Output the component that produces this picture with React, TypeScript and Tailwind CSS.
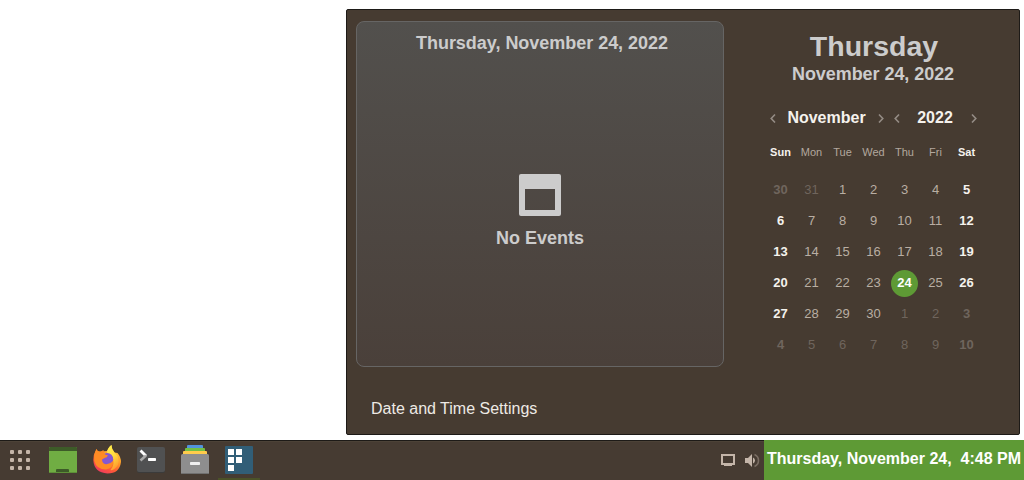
const WEEKDAYS = ['Sun', 'Mon', 'Tue', 'Wed', 'Thu', 'Fri', 'Sat'];
const DAYS = [30, 31, ...Array.from({ length: 30 }, (_, i) => i + 1), ...Array.from({ length: 10 }, (_, i) => i + 1)];

function dayClass(index: number): string {
  const outside = index < 2 || index > 31;
  const weekend = index % 7 === 0 || index % 7 === 6;
  if (index === 25) return 'mt-[2px] bg-[#5e9a35] pb-[2px] font-bold text-white';
  if (outside) return weekend ? 'font-bold text-[#6f655d]' : 'text-[#6f655d]';
  return weekend ? 'font-bold text-[#f5f2ed]' : 'text-[#b9aea3]';
}

function Chevron({ right = false }: { right?: boolean }) {
  return (
    <svg width="6" height="10" viewBox="0 0 6 10" fill="none" stroke="#948c85" strokeWidth="1.6">
      <path d={right ? 'M1 1.5 4.8 5.5 1 9.5' : 'M5 1.5 1.2 5.5 5 9.5'} />
    </svg>
  );
}

function EventsCard() {
  return (
    <section className="flex h-[346px] w-[368px] flex-col items-center rounded-lg border border-[#666564] bg-linear-to-b from-[#52504d] to-[#4a403a] text-lg font-bold text-[#cccccc]">
      <h2 className="mt-[7px] ml-1 leading-7 tracking-[-0.03px]">Thursday, November 24, 2022</h2>
      <svg className="mt-[117px]" width="42" height="42" viewBox="0 0 42 42">
        <path fill="#cccccc" fillRule="evenodd" d="M2 0H40Q42 0 42 2V40Q42 42 40 42H2Q0 42 0 40V2Q0 0 2 0ZM6 15V36H36V15Z" />
      </svg>
      <p className="mt-2 leading-7">No Events</p>
    </section>
  );
}

function Calendar() {
  return (
    <section className="flex w-[217px] flex-col items-center">
      <h1 className="mt-[5px] ml-px text-[28.5px] leading-[42px] font-bold text-[#cccccc]">Thursday</h1>
      <p className="-ml-px text-lg leading-[14px] font-bold tracking-[-0.06px] text-[#cccccc]">November 24, 2022</p>
      <div className="mt-[25px] flex h-6 w-[207px] items-center justify-between text-base font-bold text-[#f5f2ed]">
        <div className="flex w-[114px] items-center justify-between">
          <Chevron />
          <span className="-ml-px">November</span>
          <Chevron right />
        </div>
        <div className="flex w-[83px] items-center justify-between">
          <Chevron />
          <span className="-ml-px">2022</span>
          <Chevron right />
        </div>
      </div>
      <div className="mt-3 grid h-5 grid-cols-7 text-center text-[11px] leading-5">
        {WEEKDAYS.map((day, i) => (
          <span key={day} className={i % 6 === 0 ? 'w-[31px] font-bold text-[#f5f2ed]' : 'w-[31px] text-[#b3a89e]'}>
            {day}
          </span>
        ))}
      </div>
      <div className="mt-3 grid grid-cols-7 text-[13px]">
        {DAYS.map((day, i) => (
          <span key={i} className="flex h-[31px] w-[31px] items-center justify-center">
            <span className={`flex h-[27px] w-[27px] items-center justify-center rounded-full leading-none ${dayClass(i)}`}>{day}</span>
          </span>
        ))}
      </div>
    </section>
  );
}

function AppsIcon() {
  return (
    <svg width="22" height="22" viewBox="0 0 22 22" fill="#c4b5a9">
      {[1, 9, 17].map((y) => [1, 9, 17].map((x) => <rect key={`${x}-${y}`} x={x} y={y} width="4" height="4" rx="1" />))}
    </svg>
  );
}

function DesktopIcon() {
  return (
    <svg width="28" height="28" viewBox="0 0 28 28">
      <rect y="1" width="28" height="26" rx="1" fill="#70ad43" />
      <path d="M0 5V2Q0 1 1 1H27Q28 1 28 2V5ZM7 26V24Q7 23 8 23H19Q20 23 20 24V26Z" fill="#3d5b28" />
      <path d="M0 26H28Q28 27 27 27H1Q0 27 0 26Z" fill="#5d9038" />
    </svg>
  );
}

function FirefoxIcon() {
  return (
    <svg width="28" height="30" viewBox="0 0 28 30">
      <defs>
        <linearGradient id="fox" x1=".85" y1=".1" x2=".3" y2="1">
          <stop offset="0" stopColor="#ffd13a" />
          <stop offset=".4" stopColor="#ff9828" />
          <stop offset=".7" stopColor="#ff5a36" />
          <stop offset="1" stopColor="#f0395f" />
        </linearGradient>
        <linearGradient id="flame" x1=".3" y1="0" x2=".7" y2="1">
          <stop offset="0" stopColor="#fff04f" />
          <stop offset=".5" stopColor="#ffd83c" />
          <stop offset="1" stopColor="#ff942d" />
        </linearGradient>
      </defs>
      <path fill="url(#fox)" d="M3.5 5Q4 8 7 7.5L14 7Q15.5 3.5 18.4 1Q18.5 5 21.5 8.5L24.5 9Q28 13 28 18Q26.5 29.5 14.5 29.5Q1 28.5 .3 16Q.2 10.5 3.5 5Z" />
      <path fill="url(#flame)" d="M18.4 1Q18.5 5 21.5 8.5Q25 11.5 25.5 15Q26.5 21 21.5 25Q19.5 26.5 17.5 26Q22.5 20 19.5 14Q18 10.5 14 8.5Q14.5 4 18.4 1Z" />
      <ellipse cx="14.2" cy="15.3" rx="6" ry="6.4" fill="#8558d0" />
      <path fill="#ff8b24" d="M3.5 5Q4.5 8 7.5 7.7L10.5 6Q10.5 9 12 10.5L15 11.5Q14 13.5 11.5 14L9 15.5Q9 19.5 13 20.3Q17 20.5 20 17Q20.5 24.5 13 25.5Q3.5 25.5 1.3 17Q.5 10 3.5 5Z" />
    </svg>
  );
}

function TerminalIcon() {
  return (
    <svg width="28" height="26" viewBox="0 0 28 26">
      <rect y="1" width="28" height="25" rx="2" fill="#3b3b3b" />
      <rect width="28" height="25" rx="2" fill="#505152" />
      <path d="M3.5 3.5 9 9" stroke="#fff" strokeWidth="2.8" />
      <path d="M9 8.5 3.5 13.5" stroke="#aaa" strokeWidth="2.5" />
      <rect x="11" y="11" width="8" height="3" rx=".8" fill="#fff" />
    </svg>
  );
}

function FilesIcon() {
  return (
    <svg width="28" height="29" viewBox="0 0 28 29">
      <rect x="6" width="16" height="4" rx="1" fill="#5293dc" />
      <rect x="4" y="3" width="20" height="4" rx="1" fill="#72bf44" />
      <rect x="2" y="6" width="24" height="4" rx="1" fill="#ffcc4b" />
      <rect y="9" width="28" height="20" rx="1.5" fill="#8e8e8e" />
      <rect y="28" width="28" height="1" fill="#707070" />
      <rect x="9" y="17" width="10" height="3" rx=".7" fill="#efefef" />
    </svg>
  );
}

function TilesIcon() {
  return (
    <svg width="28" height="28" viewBox="0 0 28 28">
      <rect width="28" height="28" rx="1" fill="#315e77" />
      <path fill="#fff" d="M3 3H9V9H3ZM11 3H17V9H11ZM3 11H9V17H3ZM11 11H17V17H11ZM3 19H9V25H3Z" />
    </svg>
  );
}

function Taskbar() {
  return (
    <footer className="flex h-10 bg-[#463b32]">
      <div className="flex flex-1 items-start border-t border-[#1d1a17] shadow-[inset_0_1px_0_#4c4237]">
        <div className="mt-2 ml-[9px]"><AppsIcon /></div>
        <div className="mt-[5px] ml-[18px]"><DesktopIcon /></div>
        <div className="mt-[3px] ml-4"><FirefoxIcon /></div>
        <div className="mt-[6px] ml-4"><TerminalIcon /></div>
        <div className="mt-1 ml-4"><FilesIcon /></div>
        <div className="ml-[9px] flex h-[39px] w-[42px] justify-center border-b-2 border-[#4b5228] pt-[5px]"><TilesIcon /></div>
        <div className="mt-[12px] ml-auto flex gap-[9px] pr-1">
          <svg width="15" height="14" viewBox="0 0 15 14">
            <path d="M2 2H14V11H2Z" fill="none" stroke="#c4b5a9" strokeWidth="2" />
            <path d="M4 11H12V13H4Z" fill="#c4b5a9" />
          </svg>
          <svg width="16" height="15" viewBox="0 0 16 15">
            <path d="M1 5H4L8 1V14L4 10H1Z" fill="#c4b5a9" />
            <path d="M9 4.5Q11 5.5 11 7.5T9 10.5Z" fill="#c4b5a9" />
            <path d="M10.5 1.5Q14.5 3.2 14.5 7.5T10.5 13.5" fill="none" stroke="#7a6d63" strokeWidth="1.6" />
          </svg>
        </div>
      </div>
      <div className="flex w-[260px] justify-center bg-[#5e9a35] pt-[7px] text-base leading-6 font-bold whitespace-pre text-white">
        {'Thursday, November 24,  4:48 PM'}
      </div>
    </footer>
  );
}

export default function App() {
  return (
    <main className="flex h-[480px] w-[1024px] flex-col overflow-hidden bg-white pt-[9px] font-['Liberation_Sans',Arial,sans-serif]">
      <div className="mb-[5px] ml-[346px] flex h-[426px] w-[674px] flex-col rounded-[2px] border border-[#1d1a17] bg-[#463b31]">
        <div className="mt-[11px] ml-[9px] flex h-[346px]">
          <EventsCard />
          <div className="-mt-px ml-[41px]"><Calendar /></div>
        </div>
        <div className="mt-[30px] ml-6 text-base leading-6 text-[#eeeae5]">Date and Time Settings</div>
      </div>
      <Taskbar />
    </main>
  );
}
